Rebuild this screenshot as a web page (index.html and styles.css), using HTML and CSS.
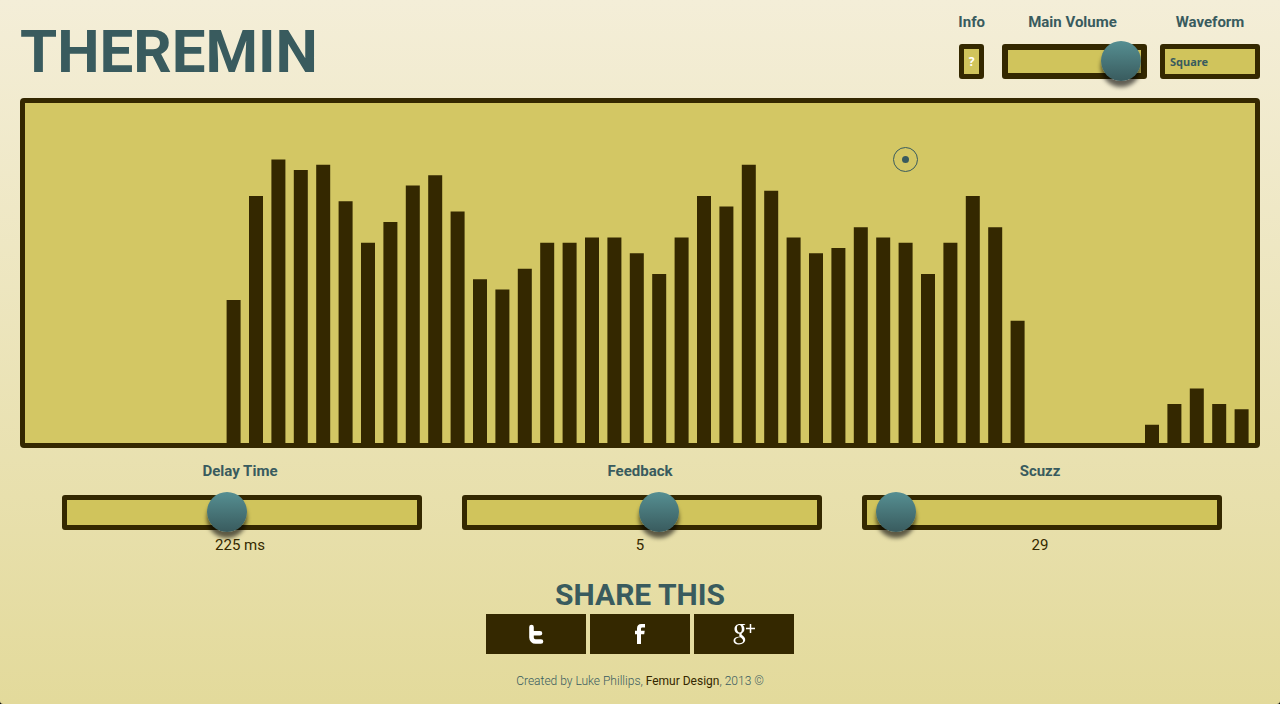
FILE: index.html
```html
<!DOCTYPE html>
<html lang="en">
<head>
  <meta charset="utf-8">
  <meta name="viewport" content="width=device-width, initial-scale=1">
  <title>Theremin</title>
  <link rel="stylesheet" href="styles.css">
</head>
<body>
  <header class="header">
    <h1 class="logo">THEREMIN</h1>
    <div class="controls">
      <div class="control">
        <label class="label" for="info">Info</label>
        <button class="box info" id="info" type="button">?</button>
      </div>
      <div class="control control-volume">
        <label class="label" for="volume">Main Volume</label>
        <input class="slider slider-volume" id="volume" type="range" min="0" max="100" value="100">
      </div>
      <div class="control">
        <label class="label" for="waveform">Waveform</label>
        <select class="box waveform" id="waveform">
          <option>Sine</option>
          <option selected>Square</option>
          <option>Sawtooth</option>
          <option>Triangle</option>
        </select>
      </div>
    </div>
  </header>

  <main>
    <div class="stage">
      <svg class="spectrum" viewBox="0 0 12300 3400" preserveAspectRatio="none" role="img" aria-label="Frequency spectrum">
        <path fill="#342800" d="M2016 3400
          v-1430h140v1430h84 v-2470h140v2470h84 v-2834h140v2834h84 v-2730h140v2730h84
          v-2782h140v2782h84 v-2418h140v2418h84 v-2002h140v2002h84 v-2210h140v2210h84
          v-2574h140v2574h84 v-2678h140v2678h84 v-2314h140v2314h84 v-1638h140v1638h84
          v-1534h140v1534h84 v-1742h140v1742h84 v-2002h140v2002h84 v-2002h140v2002h84
          v-2054h140v2054h84 v-2054h140v2054h84 v-1898h140v1898h84 v-1690h140v1690h84
          v-2054h140v2054h84 v-2470h140v2470h84 v-2366h140v2366h84 v-2782h140v2782h84
          v-2522h140v2522h84 v-2054h140v2054h84 v-1898h140v1898h84 v-1950h140v1950h84
          v-2158h140v2158h84 v-2054h140v2054h84 v-2002h140v2002h84 v-1690h140v1690h84
          v-2002h140v2002h84 v-2470h140v2470h84 v-2158h140v2158h84 v-1222h140v1222z
          M11200 3400
          v-182h140v182h84 v-390h140v390h84 v-546h140v546h84 v-390h140v390h84 v-338h140v338z"/>
      </svg>
      <svg class="pointer" viewBox="0 0 25 25" aria-hidden="true">
        <circle cx="12.5" cy="12.5" r="12" fill="none" stroke="#395b5e"/>
        <circle cx="12.5" cy="12.5" r="3.5" fill="#395b5e"/>
      </svg>
    </div>

    <section class="effects">
      <div class="effect">
        <label class="label" for="delay">Delay Time</label>
        <input class="slider" id="delay" type="range" min="0" max="500" value="225">
        <output class="value" for="delay">225 ms</output>
      </div>
      <div class="effect">
        <label class="label" for="feedback">Feedback</label>
        <input class="slider" id="feedback" type="range" min="0" max="9" value="5">
        <output class="value" for="feedback">5</output>
      </div>
      <div class="effect">
        <label class="label" for="scuzz">Scuzz</label>
        <input class="slider" id="scuzz" type="range" min="0" max="999" value="29">
        <output class="value" for="scuzz">29</output>
      </div>
    </section>

    <section class="share">
      <h2 class="share-title">SHARE THIS</h2>
      <div class="share-links">
        <a class="share-link" href="#twitter" aria-label="Twitter">
          <svg class="icon" viewBox="0 0 24 24" aria-hidden="true">
            <path d="M7.500 5v10.500a4 4 0 0 0 4 4h5.500M7.500 11.200h8.500" fill="none" stroke="#fff" stroke-width="4.600" stroke-linecap="round"/>
          </svg>
        </a>
        <a class="share-link" href="#facebook" aria-label="Facebook">
          <svg class="icon" viewBox="0 0 24 24" aria-hidden="true">
            <path d="M9 22v-9.800H7V8.700h2V6.500C9 3.500 10.500 2 13.200 2H17v3.500h-2.200c-1.300 0-1.800.4-1.800 1.500v1.700h3.700l-.5 3.500H13V22z" fill="#fff"/>
          </svg>
        </a>
        <a class="share-link" href="#google-plus" aria-label="Google Plus">
          <svg class="icon" viewBox="0 0 24 24" aria-hidden="true">
            <path fill="#fff" fill-rule="evenodd" d="M13.500 2H8C4.600 2 2.500 4.300 2.500 7s2 4.800 5 4.800c-.5.900-.4 1.700.3 2.600-4.200.2-6.300 1.800-6.300 4.300 0 2.300 2.100 3.700 5.400 3.700 3.900 0 6.300-2 6.300-4.600 0-1.900-.9-2.900-2.600-4.200-1.500-1.200-1.400-1.900-.1-2.900 1.300-1 1.900-2.200 1.900-3.800 0-1.600-.6-2.900-1.600-3.900h1.500zM7.300 3c1.500 0 2.500 2 2.500 4.300 0 2-.7 3.300-2 3.300-1.700 0-2.900-2-2.900-4.400C4.900 4.200 5.800 3 7.300 3zM8.200 15.300c1.800 1.200 2.900 2 2.900 3.500 0 1.500-1.300 2.500-3.700 2.500-2.400 0-4.100-1.200-4.100-2.900 0-1.900 1.800-3 4.900-3.100z"/>
            <path d="M18.500 2v9M14 6.500h9" stroke="#fff" stroke-width="1.500"/>
          </svg>
        </a>
      </div>
    </section>
  </main>

  <footer class="footer">Created by Luke Phillips, <a class="footer-link" href="#femur">Femur Design</a>, 2013 ©</footer>
</body>
</html>
```
FILE: styles.css
```css
* {
  box-sizing: border-box;
}

html {
  background: #000;
}

body {
  margin: 0;
  min-height: 100vh;
  padding: 0 20px 12px;
  border-radius: 0 0 3px 3px;
  background: linear-gradient(#f4eed8, #e3da9b);
  color: #395b5e;
  font-family: Roboto, "Liberation Sans", sans-serif;
  font-size: 15px;
  line-height: 20px;
}

.header {
  display: flex;
  justify-content: space-between;
  padding-bottom: 19px;
}

.logo {
  margin: 0;
  padding-top: 16px;
  font-size: 60px;
  font-weight: 700;
  line-height: 72px;
}

.controls {
  display: flex;
  gap: 15px;
  padding-top: 12px;
}

.header {
  height: 98px;
}

.control {
  display: flex;
  flex-direction: column;
  align-items: center;
  gap: 12px;
}

.control-volume {
  width: 145px;
}

.label {
  display: block;
  font-weight: 700;
  white-space: nowrap;
}

.box {
  height: 35px;
  margin: 0;
  border: 5px solid #342800;
  border-radius: 3px;
  background: #d0c45c;
  font-family: "Noto Sans", "Open Sans", sans-serif;
  font-size: 11px;
  font-weight: 700;
}

.info {
  width: 25px;
  padding: 0;
  color: #fff;
  font-size: 12px;
}

.waveform {
  width: 100px;
  padding: 0 5px;
  color: #395b5e;
  appearance: none;
}

.slider {
  appearance: none;
  display: block;
  width: 90%;
  height: 35px;
  margin: 0;
  padding-bottom: 1px;
  border: 5px solid #342800;
  border-radius: 3px;
  background: #d0c45c;
  position: relative;
  left: 2px;
}

.slider-volume {
  width: 100%;
  border-width: 6px;
}

.slider::-webkit-slider-thumb {
  appearance: none;
  width: 40px;
  height: 40px;
  border-radius: 50%;
  background: linear-gradient(#568f92, #395b5e);
  box-shadow: 0 6px 4px rgba(0, 0, 0, 0.6);
}

.stage {
  position: relative;
  border: 5px solid #342800;
  border-radius: 4px;
  background: #d3c764;
}

.spectrum {
  display: block;
  width: 100%;
  height: 340px;
}

.pointer {
  position: absolute;
  top: 44px;
  left: 868px;
  width: 25px;
  height: 25px;
}

.effects {
  display: grid;
  grid-template-columns: repeat(3, 1fr);
  padding: 13px 20px 0;
}

.effect {
  display: flex;
  flex-direction: column;
  align-items: center;
}

.effect .slider {
  margin: 14px 0 5px;
}

.value {
  color: #342800;
}

.share {
  padding-top: 22px;
  text-align: center;
}

.share-title {
  margin: 0 0 2px;
  font-size: 30px;
  line-height: 35px;
}

.share-links {
  display: flex;
  justify-content: center;
  gap: 4px;
}

.share-link {
  display: flex;
  align-items: center;
  justify-content: center;
  width: 100px;
  height: 40px;
  background: #342800;
}

.icon {
  width: 24px;
  height: 24px;
}

.footer {
  padding-top: 17px;
  font-size: 12px;
  font-weight: 300;
  text-align: center;
}

.footer-link {
  color: #342800;
  font-weight: 400;
  text-decoration: none;
}
```
